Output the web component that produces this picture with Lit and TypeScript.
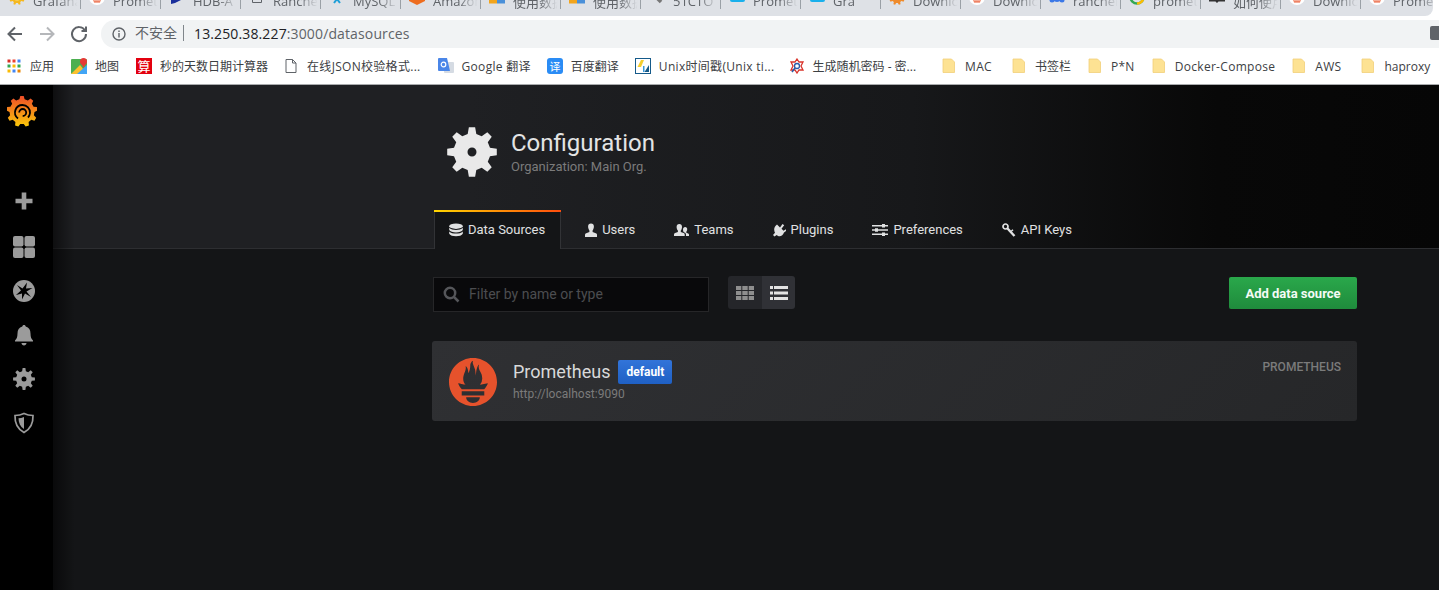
import { LitElement, html, css, svg } from "lit";
import { customElement } from "lit/decorators.js";

// cog outline, used for the grafana logo, the side menu and the page header
function cogPath(cx: number, cy: number, outer: number, inner: number, teeth: number) {
  const step = (Math.PI * 2) / teeth;
  const pts: string[] = [];
  for (let i = 0; i < teeth; i++) {
    const a = i * step - Math.PI / 2;
    const w = step * 0.2;
    const v = step * 0.3;
    const p = (r: number, t: number) =>
      `${(cx + Math.cos(t) * r).toFixed(2)} ${(cy + Math.sin(t) * r).toFixed(2)}`;
    pts.push(p(inner, a - v), p(outer, a - w * 0.8), p(outer, a + w * 0.8), p(inner, a + v));
  }
  return "M" + pts.join("L") + "Z";
}

const prometheusPath =
  "M12 0C5.373 0 0 5.372 0 12c0 6.627 5.373 12 12 12s12-5.373 12-12c0-6.628-5.373-12-12-12zm0 22.46c-1.885 0-3.414-1.26-3.414-2.814h6.828c0 1.553-1.529 2.813-3.414 2.813zm5.64-3.745H6.36v-2.046h11.28v2.046zm-.04-3.098H6.391c-.037-.043-.075-.086-.111-.13-1.155-1.401-1.427-2.133-1.69-2.879-.005-.025 1.4.287 2.395.511 0 0 .513.119 1.262.255-.72-.843-1.147-1.915-1.147-3.01 0-2.406 1.845-4.508 1.18-6.207.648.053 1.34 1.367 1.387 3.422.689-.951.977-2.69.977-3.755 0-1.103.727-2.385 1.454-2.429-.648 1.069.168 1.984.894 4.256.272.854.237 2.29.447 3.201.07-1.892.395-4.652 1.595-5.605-.529 1.2.079 2.702.494 3.424.671 1.164 1.078 2.047 1.078 3.716a4.642 4.642 0 0 1-1.11 2.996c.792-.149 1.34-.283 1.34-.283l2.573-.502s-.374 1.538-1.81 3.019z";

// tab favicons, only their lower part shows in the cropped strip
const favs = {
  sun: svg`<svg class="fav" viewBox="0 0 16 16"><path d="${cogPath(8, 8, 8, 6, 9)}" fill="#f5b81f"/><circle cx="8" cy="8" r="3.500" fill="#fbe27a"/></svg>`,
  pot: svg`<svg class="fav" viewBox="0 0 16 16"><circle cx="8" cy="8" r="8" fill="#fff"/><path d="M3 6h10l-2 7.500H5z" fill="#ea5a32"/><path d="M4 9h8v1H4zM5 11.500h6v.8H5z" fill="#fff"/></svg>`,
  blue: svg`<svg class="fav" viewBox="0 0 16 16"><path d="M2 2h13l-1 8-8 4-4 1z" fill="#1a2f9c"/></svg>`,
  doc: svg`<svg class="fav" viewBox="0 0 16 16"><path d="M3.500 1h9v12.500h-9z" fill="none" stroke="#5f6368"/></svg>`,
  dolphin: svg`<svg class="fav" viewBox="0 0 16 16"><path d="M8 3v8M4 6l4 3 4-3M5 14l3-4 3 4" fill="none" stroke="#1f9fd8" stroke-width="2"/></svg>`,
  hex: svg`<svg class="fav" viewBox="0 0 16 16"><path d="M8 0l8 4v8l-8 4-8-4V4z" fill="#ee6d1f"/></svg>`,
  book: svg`<svg class="fav" viewBox="0 0 16 16"><path d="M0 2h8v12.500H0z" fill="#f2a51d"/><path d="M8 2h8v12.500H8z" fill="#4a90d9"/></svg>`,
  clip: svg`<svg class="fav" viewBox="0 0 16 16"><path d="M3 4l9 9" stroke="#777" stroke-width="3.500"/></svg>`,
  arrow: svg`<svg class="fav" viewBox="0 0 16 16"><rect x="1" width="15" height="13" rx="2" fill="#19b0ec"/><path d="M4 10l7-3-4-1z" fill="#fff"/></svg>`,
  swirl: svg`<svg class="fav" viewBox="0 0 16 16"><path d="${cogPath(8, 8, 8, 6, 9)}" fill="#ef8b2c"/><circle cx="8" cy="8" r="3" fill="#fff"/></svg>`,
  paw: svg`<svg class="fav" viewBox="0 0 16 16"><circle cx="8" cy="9" r="4" fill="#3b78e7"/><circle cx="3" cy="11" r="2.500" fill="#3b78e7"/><circle cx="13" cy="11" r="2.500" fill="#3b78e7"/></svg>`,
  ring: svg`<svg class="fav" viewBox="0 0 16 16"><circle cx="8" cy="8" r="6.500" fill="none" stroke="#34a853" stroke-width="2.500"/><path d="M14.500 8A6.500 6.500 0 0 1 8 14.500" fill="none" stroke="#fbbc04" stroke-width="2.500"/></svg>`,
  dark: svg`<svg class="fav" viewBox="0 0 16 16"><path d="M0 3h16v9.500H9.500L8 14l-1.500-1.500H0z" fill="#333"/><path d="M3 9h3v1H3zM10 9h3v1h-3z" fill="#fff"/></svg>`,
};

const tabs = [
  ["Grafana", favs.sun], ["Prometheus", favs.pot], ["HDB-A", favs.blue], ["Rancher", favs.doc],
  ["MySQL", favs.dolphin], ["Amazon", favs.hex], ["使用数据", favs.book], ["使用数据", favs.book],
  ["51CTO", favs.clip], ["Prometheus", favs.arrow], ["Gra", favs.arrow], ["Download", favs.swirl],
  ["Download", favs.pot], ["rancher", favs.paw], ["prometheus", favs.ring], ["如何使用", favs.dark],
  ["Download", favs.pot], ["Prometheus", favs.pot],
] as const;

const folder = svg`<svg class="bi" viewBox="0 0 16 16"><path d="M2 1h8.500l3 3v10.500H2z" fill="#fde293" stroke="#f1cf78" stroke-width=".8"/></svg>`;

const bookmarks = [
  {
    label: "应用", gap: 17,
    icon: svg`<svg class="bi" viewBox="0 0 16 16">
      <g fill="#d93025"><rect x="1.500" y="1.500" width="3" height="3"/><rect x="6.500" y="6.500" width="3" height="3" fill="#fbbc04"/></g>
      <rect x="6.500" y="1.500" width="3" height="3" fill="#ea4335"/><rect x="11.500" y="1.500" width="3" height="3" fill="#4285f4"/>
      <rect x="1.500" y="6.500" width="3" height="3" fill="#34a853"/><rect x="11.500" y="6.500" width="3" height="3" fill="#34a853"/>
      <rect x="1.500" y="11.500" width="3" height="3" fill="#fbbc04"/><rect x="6.500" y="11.500" width="3" height="3" fill="#4285f4"/><rect x="11.500" y="11.500" width="3" height="3" fill="#ea8600"/></svg>`,
  },
  {
    label: "地图", gap: 17,
    icon: svg`<svg class="bi" viewBox="0 0 16 16"><rect y="1" width="16" height="15" rx="1" fill="#4caf50"/>
      <path d="M0 16 9 7l7 9z" fill="#fbc02d"/><path d="M6 16 16 7v9z" fill="#42a5f5"/><circle cx="12.500" cy="3.500" r="3.500" fill="#e53935"/><path d="M10 5l2.500 5 2.500-5z" fill="#e53935"/></svg>`,
  },
  {
    label: "秒的天数日期计算器", gap: 15,
    icon: svg`<svg class="bi" viewBox="0 0 16 16"><rect width="16" height="16" fill="#e3000f"/><text x="8" y="13" font-size="13" fill="#fff" text-anchor="middle" font-family="'Noto Sans CJK SC',sans-serif">算</text></svg>`,
  },
  {
    label: "在线JSON校验格式...", gap: 17, latin: true,
    icon: svg`<svg class="bi" viewBox="0 0 16 16"><path d="M3 1.500h6.500l3.500 3.500v9.500H3zM9.500 1.500V5H13" fill="#fff" stroke="#5f6368"/></svg>`,
  },
  {
    label: "Google 翻译", gap: 16, latin: true,
    icon: svg`<svg class="bi" viewBox="0 0 16 16"><rect x="6" y="4" width="10" height="11" rx="1" fill="#d5dbe3"/><path d="M0 1a1 1 0 0 1 1-1h8l3 13H1a1 1 0 0 1-1-1z" fill="#4a86e8"/><circle cx="5.500" cy="6.500" r="2.300" fill="none" stroke="#fff" stroke-width="1.200"/></svg>`,
  },
  {
    label: "百度翻译", gap: 16,
    icon: svg`<svg class="bi" viewBox="0 0 16 16"><rect width="16" height="16" rx="3" fill="#2a8cf5"/><text x="8" y="12.500" font-size="11" fill="#fff" text-anchor="middle" font-family="'Noto Sans CJK SC',sans-serif">译</text></svg>`,
  },
  {
    label: "Unix时间戳(Unix ti...", gap: 14, latin: true,
    icon: svg`<svg class="bi" viewBox="0 0 16 16"><rect x=".5" y=".5" width="15" height="15" fill="#fff" stroke="#155a8a"/><path d="M6 2h3L6 9H2.500z" fill="#f6cf2f"/><path d="M8 14V8h1.500v6z" fill="#3a9ad9"/><path d="M9.500 14 14 7v7z" fill="#155a8a"/></svg>`,
  },
  {
    label: "生成随机密码 - 密...", gap: 25,
    icon: svg`<svg class="bi" viewBox="0 0 16 16"><path d="M8 1l2 3h4l-2 4 2 4h-4l-2 3-2-3H2l2-4-2-4h4z" fill="none" stroke="#d9342b" stroke-width="1.300"/><circle cx="8" cy="8" r="2.500" fill="none" stroke="#2b5aa8" stroke-width="1.300"/><path d="M3 14l3-4" stroke="#2b5aa8" stroke-width="1.500"/></svg>`,
  },
  { label: "MAC", gap: 19, latin: true, icon: folder },
  { label: "书签栏", gap: 16, icon: folder },
  { label: "P*N", gap: 16, latin: true, icon: folder },
  { label: "Docker-Compose", gap: 16, latin: true, icon: folder },
  { label: "AWS", gap: 19, latin: true, icon: folder },
  { label: "haproxy", gap: 0, icon: folder },
];

const pageTabs = [
  {
    label: "Data Sources", active: true,
    icon: svg`<svg class="ti" viewBox="0 0 14 14"><ellipse cx="7" cy="3.200" rx="6.800" ry="2.700"/><path d="M.2 4.800C1.500 6.500 4.500 7 7 7s5.500-.5 6.800-2.200v2.300C13 8.700 10 9.500 7 9.500S1 8.700.2 7.100zM.2 8.400C1.500 10 4.500 10.600 7 10.600s5.500-.6 6.800-2.200v2.400C13 12.500 10 13.300 7 13.300s-6-.8-6.800-2.500z"/></svg>`,
  },
  {
    label: "Users",
    icon: svg`<svg class="ti w12" viewBox="0 0 12 14"><path d="M6 .5c1.900 0 2.900 1.300 2.900 3.100 0 1.600-.7 3.200-1.300 3.900v1.400l3.200 1.300c.7.300 1.200.8 1.200 1.500v2.300H0v-2.300c0-.7.500-1.200 1.200-1.500l3.200-1.300V7.500C3.800 6.800 3.100 5.200 3.100 3.600 3.100 1.800 4.100.5 6 .5z"/></svg>`,
  },
  {
    label: "Teams",
    icon: svg`<svg class="ti w15" viewBox="0 0 15 14"><path d="M5.300 1c1.800 0 2.700 1.300 2.700 3 0 1.500-.7 3-1.200 3.600v1.300l2.800 1.200c.7.300 1.100.8 1.100 1.400V13H0v-1.500c0-.6.400-1.100 1.100-1.400l2.800-1.200V7.600C3.300 7 2.600 5.500 2.600 4c0-1.700.9-3 2.700-3z"/><path d="M11.200 4c1.300 0 2 1 2 2.200 0 1-.5 2.100-.9 2.600v.9l1.900.8c.5.200.8.600.8 1V13h-3v-1.500c0-1-.6-1.700-1.500-2.100l-.9-.4c-.4-.6-.6-1.500-.6-2.500C9 5 9.800 4 11.200 4z"/></svg>`,
  },
  {
    label: "Plugins",
    icon: svg`<svg class="ti w13" viewBox="0 0 13 14"><path d="M4 1.500 7 4.500 9.500 1l1.700 1.300-2.700 3.500 2 2 2.500-1.500.5 1.300-2.500 2C10 12.500 7.500 14 5 13L3.700 12 1.500 13.500 0 12l2-2.300C.8 7.500.5 4 4 1.500z"/></svg>`,
  },
  {
    label: "Preferences",
    icon: svg`<svg class="ti w16" viewBox="0 0 16 14"><path d="M0 2h10V1h3v1h3v1.500h-3v1h-3v-1H0zM0 6.300h3v-1h3v1h10v1.500H6v1H3v-1H0zM0 10.500h10v-1h3v1h3V12h-3v1h-3v-1H0z"/></svg>`,
  },
  {
    label: "API Keys",
    icon: svg`<svg class="ti" viewBox="0 0 14 14"><circle cx="3.500" cy="3.500" r="2.500" fill="none" stroke="currentColor" stroke-width="1.700"/><path d="M5.300 5.300 12.500 13" stroke="currentColor" stroke-width="2.400"/><path d="M9 8.500l2-1.800" stroke="currentColor" stroke-width="1.500"/></svg>`,
  },
];

const sideIcons = [
  svg`<svg class="si" viewBox="0 0 22 22"><path d="M8.700 2.500h4.600v6.200h6.200v4.600h-6.200v6.200H8.700v-6.200H2.500V8.700h6.200z"/></svg>`,
  svg`<svg class="si" viewBox="0 0 22 22"><rect width="10.500" height="10.500" rx="2"/><rect x="11.500" width="10.500" height="10.500" rx="2"/><rect y="11.500" width="10.500" height="10.500" rx="2"/><rect x="11.500" y="11.500" width="10.500" height="10.500" rx="2"/></svg>`,
  svg`<svg class="si" viewBox="0 0 22 22"><circle cx="11" cy="11" r="11"/><path d="M14 2.500 13 8.500 19.500 8 13.500 11.500 18 17 12 13.500 9 19.500 9 13.500 3 15 8 10.500 4 5 9.500 8.500z" fill="#000"/></svg>`,
  svg`<svg class="si" viewBox="0 0 22 22"><path d="M11 1c1 0 1.600.7 1.700 1.500C16 3.300 17.500 6 17.500 9.500c0 4 1 5.500 2.500 7v1H2v-1c1.500-1.500 2.500-3 2.500-7C4.500 6 6 3.300 9.300 2.500 9.400 1.700 10 1 11 1zM8.500 19h5c0 1.500-1.200 2.500-2.500 2.500S8.500 20.500 8.500 19z"/></svg>`,
  svg`<svg class="si" viewBox="0 0 22 22"><path fill-rule="evenodd" d="${cogPath(11, 11, 11, 8, 8)}M11 8.500a2.500 2.500 0 1 0 0 5 2.500 2.500 0 0 0 0-5z"/></svg>`,
  svg`<svg class="si" viewBox="0 0 22 22"><path d="M11 1.500c3 1.500 6 2 9 2 .3 7.500-2.500 13.500-9 17-6.500-3.500-9.300-9.500-9-17 3 0 6-.5 9-2z" fill="none" stroke="currentColor" stroke-width="1.700"/><path d="M11 5c-1.800.8-3.700 1.200-5.500 1.300C5.600 11 7.200 14.700 11 17z" /></svg>`,
];

@customElement("app-root")
export class AppRoot extends LitElement {
  static styles = css`
    :host {
      display: block;
      height: 590px;
      overflow: hidden;
      background: #fff;
      font-family: Roboto, "Liberation Sans", sans-serif;
    }
    .browser {
      height: 85px;
      background: #fff;
      box-sizing: border-box;
      border-bottom: 1px solid #a9abad;
      font-family: "Open Sans", "Noto Sans CJK SC", sans-serif;
      color: #3c4043;
    }
    .strip {
      display: flex;
      align-items: flex-end;
      box-sizing: border-box;
      height: 16px;
      width: 1433px;
      padding-left: 1px;
      overflow: hidden;
      background: #dee1e6;
      border-bottom-right-radius: 8px;
    }
    .tab {
      flex: none;
      box-sizing: border-box;
      display: flex;
      align-items: center;
      gap: 8px;
      width: 80px;
      height: 30px;
      padding: 0 1px 0 8px;
      background: linear-gradient(#9aa0a6, #9aa0a6) right top / 1px 23px no-repeat;
      font-size: 13px;
      color: #5f6368;
      white-space: nowrap;
      overflow: hidden;
    }
    .tab span {
      flex: 1;
      overflow: hidden;
      -webkit-mask-image: linear-gradient(90deg, #000 55%, transparent 95%);
      mask-image: linear-gradient(90deg, #000 55%, transparent 95%);
    }
    .fav {
      flex: none;
      width: 16px;
      height: 16px;
      margin-bottom: 8px;
    }
    .toolbar {
      display: flex;
      align-items: center;
      height: 28px;
      margin-top: 4px;
      padding-left: 5px;
    }
    .nav {
      flex: none;
      width: 20px;
      height: 20px;
      margin-right: 12px;
      fill: none;
      stroke: #5f6368;
      stroke-width: 2;
    }
    .nav.off {
      stroke: #b5b7ba;
    }
    .omni {
      flex: 1;
      display: flex;
      align-items: center;
      height: 28px;
      padding: 0 0 2px 11px;
      box-sizing: border-box;
      background: #f1f3f4;
      border-radius: 14px 0 0 14px;
      font-size: 14px;
      letter-spacing: 0.13px;
      color: #5f6368;
      white-space: nowrap;
    }
    .info {
      width: 14px;
      height: 14px;
      margin: 2px 9px 0 0;
    }
    .insecure {
      font-size: 14px;
      letter-spacing: 0;
      padding-right: 6px;
      margin-right: 10px;
      border-right: 1px solid #80868b;
      line-height: 16px;
    }
    .host {
      color: #202124;
    }
    .translate {
      margin-left: auto;
      width: 9px;
      height: 14px;
      background: #5f6368;
      border-radius: 2px 0 0 2px;
    }
    .bookmarks {
      display: flex;
      align-items: center;
      height: 36px;
      padding-left: 6px;
      font-size: 12px;
      white-space: nowrap;
    }
    .bm {
      display: flex;
      align-items: center;
      gap: 8px;
    }
    .bm.latin span {
      letter-spacing: 0.3px;
    }
    .bi {
      flex: none;
      width: 16px;
      height: 16px;
    }

    .app {
      display: flex;
      height: 505px;
    }
    .side {
      flex: none;
      width: 53px;
      padding: 11px 5px 0 0;
      background: #000;
      display: flex;
      flex-direction: column;
      align-items: center;
      box-sizing: border-box;
    }
    .logo {
      flex: none;
      width: 30px;
      height: 31px;
      margin: 0 5px 63px 0;
    }
    .si {
      flex: none;
      width: 22px;
      height: 22px;
      margin-bottom: 22px;
      fill: currentColor;
      color: #9b9b9b;
    }
    .si:nth-of-type(2) {
      margin-bottom: 24px;
    }
    .content {
      flex: 1;
      position: relative;
      background: #141517;
      color: #d8d9da;
    }
    .content::after {
      content: "";
      position: absolute;
      left: 0;
      top: 0;
      bottom: 0;
      width: 22px;
      background: linear-gradient(90deg, rgba(0, 0, 0, 0.55), transparent);
    }
    .page-head {
      box-sizing: border-box;
      height: 164px;
      padding: 42px 0 0 379px;
      border-bottom: 1px solid #2d2e31;
      background: linear-gradient(90deg, #1f2023 0%, #1f2023 30%, #17181a 62%, #080808 84%, #060606 100%);
    }
    .title-row {
      display: flex;
      align-items: center;
      gap: 14px;
      margin-left: 15px;
      height: 50px;
    }
    .title-row svg {
      width: 50px;
      height: 50px;
      fill: #e9e9e9;
    }
    h1 {
      margin: 0;
      font-size: 24px;
      font-weight: 400;
      line-height: 28px;
      color: #e3e4e4;
    }
    .sub {
      margin-top: 2px;
      font-size: 13px;
      line-height: 16px;
      color: #7b7b7b;
    }
    .tabs {
      display: flex;
      margin: 33px 0 0 2px;
      gap: 9px;
    }
    .ptab {
      box-sizing: border-box;
      display: flex;
      align-items: center;
      gap: 5px;
      height: 39px;
      padding: 0 15px;
      font-size: 13px;
      white-space: nowrap;
      color: #e0e1e2;
    }
    .ptab.active {
      position: relative;
      background: #141517;
      border: 1px solid #323336;
      border-top: 0;
      border-bottom: 0;
      padding: 0 15px 0 14px;
    }
    .ptab.active::before {
      content: "";
      position: absolute;
      left: -1px;
      right: -1px;
      top: 0;
      height: 2px;
      background: linear-gradient(90deg, #ffd500, #ff4d0d);
    }
    .ti {
      flex: none;
      width: 14px;
      height: 14px;
      fill: currentColor;
    }
    .ti.w12 {
      width: 12px;
    }
    .ti.w13 {
      width: 13px;
    }
    .ti.w15 {
      width: 15px;
    }
    .ti.w16 {
      width: 16px;
    }
    .container {
      padding: 28px 82px 0 379px;
    }
    .actions {
      display: flex;
      align-items: flex-start;
      height: 35px;
    }
    .filter {
      box-sizing: border-box;
      display: flex;
      align-items: center;
      gap: 9px;
      width: 276px;
      height: 35px;
      margin-left: 1px;
      padding: 0 0 2px 9px;
      background: #09090b;
      border: 1px solid #262628;
      font-size: 14px;
      color: #4c4d50;
    }
    .filter svg {
      width: 17px;
      height: 17px;
      margin-top: 2px;
      fill: none;
      stroke: #55565a;
      stroke-width: 2.500;
    }
    .toggle {
      display: flex;
      margin: -1px 0 0 19px;
      height: 33px;
      border-radius: 3px;
      overflow: hidden;
    }
    .toggle div {
      display: flex;
      align-items: center;
      justify-content: center;
      width: 34px;
      background: #25262a;
    }
    .toggle div + div {
      width: 33px;
      background: #303136;
    }
    .toggle svg {
      width: 18px;
      height: 14px;
    }
    .add {
      box-sizing: border-box;
      display: flex;
      align-items: center;
      justify-content: center;
      margin-left: auto;
      width: 128px;
      height: 32px;
      background: linear-gradient(180deg, #2aa84b, #1f8b3c);
      border-radius: 2px;
      font-size: 13px;
      font-weight: 700;
      color: #f4fbf5;
    }
    .card {
      display: flex;
      align-items: flex-start;
      margin-top: 29px;
      height: 80px;
      box-sizing: border-box;
      padding: 17px 16px 0 17px;
      background: linear-gradient(135deg, #2f3033, #262729);
      border-radius: 3px;
    }
    .card-logo {
      flex: none;
      width: 48px;
      height: 48px;
      fill: #e6522c;
      fill-rule: evenodd;
      margin-right: 16px;
    }
    .name-row {
      display: flex;
      align-items: center;
      gap: 8px;
      height: 24px;
      margin-top: 2px;
    }
    .name {
      padding-bottom: 2px;
      font-size: 18px;
      color: #d8d9da;
    }
    .badge {
      box-sizing: border-box;
      padding: 0 8px;
      height: 24px;
      line-height: 24px;
      background: linear-gradient(180deg, #3274d9, #1f60c4);
      border-radius: 2px;
      font-size: 12px;
      font-weight: 700;
      color: #fff;
    }
    .url {
      font-size: 12px;
      line-height: 16px;
      margin-top: 2px;
      color: #7b7b7b;
    }
    .type {
      margin-left: auto;
      margin-top: 2px;
      font-size: 12px;
      font-weight: 500;
      color: #7b7b7b;
    }
  `;

  render() {
    return html`
      <div class="browser">
        <div class="strip">
          ${tabs.map(([name, icon]) => html`<div class="tab">${icon}<span>${name}</span></div>`)}
        </div>
        <div class="toolbar">
          <svg class="nav" viewBox="0 0 20 20"><path d="M17 10H4M10 3.500 3.500 10l6.500 6.500" /></svg>
          <svg class="nav off" viewBox="0 0 20 20"><path d="M3 10h13M10 3.500l6.500 6.500-6.500 6.500" /></svg>
          <svg class="nav" viewBox="0 0 20 20"><path d="M16 6.500A7 7 0 1 0 17 10M17 2.500V7h-4.500" /></svg>
          <div class="omni">
            <svg class="info" viewBox="0 0 14 14" fill="none" stroke="#5f6368" stroke-width="1.400"><circle cx="7" cy="7" r="6"/><path d="M7 6v4.500M7 3.500v1.500"/></svg>
            <span class="insecure">不安全</span>
            <span class="host">13.250.38.227</span><span>:3000/datasources</span>
            <i class="translate"></i>
          </div>
        </div>
        <div class="bookmarks">
          ${bookmarks.map(
            (b) => html`<div class="bm ${b.latin ? "latin" : ""}" style="margin-right:${b.gap}px">${b.icon}<span>${b.label}</span></div>`
          )}
        </div>
      </div>
      <div class="app">
        <nav class="side">
          <svg class="logo" viewBox="0 0 30 31">
            <defs>
              <linearGradient id="gf" x1="0" y1="1" x2="0" y2="0">
                <stop offset="0" stop-color="#fbca0a" /><stop offset="1" stop-color="#ef4d28" />
              </linearGradient>
            </defs>
            <path d="${cogPath(15, 15.5, 15.5, 12.5, 9)}" fill="url(#gf)" />
            <path d="M11 22.500A7.500 7.500 0 0 1 15.500 9a7.500 7.500 0 0 1 7.500 8c-.2 2-1 3.500-2 4.500" fill="none" stroke="#000" stroke-width="1.800" />
            <path d="M12.200 16.500a3.500 3.500 0 1 1 3.500 3.500" fill="none" stroke="#000" stroke-width="1.800" />
          </svg>
          ${sideIcons}
        </nav>
        <main class="content">
          <header class="page-head">
            <div class="title-row">
              <svg viewBox="0 0 50 50"><path fill-rule="evenodd" d="${cogPath(25, 25, 25, 18.500, 8)}M25 20.500a4.500 4.500 0 1 0 0 9 4.500 4.500 0 0 0 0-9z" /></svg>
              <div>
                <h1>Configuration</h1>
                <div class="sub">Organization: Main Org.</div>
              </div>
            </div>
            <div class="tabs">
              ${pageTabs.map(
                (t) => html`<div class="ptab ${t.active ? "active" : ""}">${t.icon}<span>${t.label}</span></div>`
              )}
            </div>
          </header>
          <section class="container">
            <div class="actions">
              <label class="filter">
                <svg viewBox="0 0 17 17"><circle cx="7" cy="7" r="5.200" /><path d="M11 11l4.500 4.500" /></svg>
                Filter by name or type
              </label>
              <div class="toggle">
                <div>
                  <svg viewBox="0 0 18 14" fill="#8e8e8e"><path d="M0 0h5.300v4H0zM6.300 0h5.400v4H6.300zM12.700 0H18v4h-5.300zM0 5h5.300v4H0zM6.300 5h5.400v4H6.300zM12.700 5H18v4h-5.300zM0 10h5.300v4H0zM6.300 10h5.400v4H6.300zM12.700 10H18v4h-5.300z" /></svg>
                </div>
                <div>
                  <svg viewBox="0 0 18 14" fill="#e3e3e3"><path d="M0 0h3v3H0zM4 0h14v3H4zM0 5.500h3v3H0zM4 5.500h14v3H4zM0 11h3v3H0zM4 11h14v3H4z" /></svg>
                </div>
              </div>
              <div class="add">Add data source</div>
            </div>
            <article class="card">
              <svg class="card-logo" viewBox="0 0 24 24"><path d="${prometheusPath}" /></svg>
              <div>
                <div class="name-row"><span class="name">Prometheus</span><span class="badge">default</span></div>
                <div class="url">http://localhost:9090</div>
              </div>
              <div class="type">PROMETHEUS</div>
            </article>
          </section>
        </main>
      </div>
    `;
  }
}
